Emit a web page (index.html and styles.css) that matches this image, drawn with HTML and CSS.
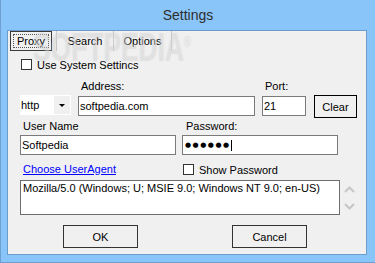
FILE: index.html
```html
<!DOCTYPE html>
<html lang="en">
<head>
  <meta charset="UTF-8">
  <meta name="viewport" content="width=device-width, initial-scale=1.0">
  <title>Settings</title>
  <link rel="stylesheet" href="styles.css">
</head>
<body>
  <div class="window">
    <div class="titlebar">Settings</div>
    <div class="client">
      <div class="tabs">
        <div class="tab active"><span class="focus">Proxy</span></div>
        <div class="tab plain">Search</div>
        <div class="tab plain last">Options</div>
      </div>

      <div class="panel">
        <div class="check-row">
          <span class="checkbox"></span>Use System Settincs
        </div>

        <div class="addr-grid">
          <span class="field-label col2">Address:</span>
          <span class="field-label col3">Port:</span>
          <div class="combo">
            <span class="combo-text">http</span>
            <span class="combo-btn"><span class="arrow"></span></span>
          </div>
          <div class="input shifted">softpedia.com</div>
          <div class="input shifted port">21</div>
          <div class="btn btn-clear">Clear</div>
        </div>

        <div class="user-grid">
          <span class="field-label">User Name</span>
          <span class="field-label pass-label">Password:</span>
          <div class="input">Softpedia</div>
          <div class="input password"><span class="dots">●●●●●●</span><span class="caret"></span></div>
        </div>

        <div class="option-row">
          <a class="link" href="#">Choose UserAgent</a>
          <div class="check-row show-pass">
            <span class="checkbox"></span>Show Password
          </div>
        </div>

        <div class="agent-row">
          <div class="agent-box">Mozilla/5.0 (Windows; U; MSIE 9.0; Windows NT 9.0; en-US)</div>
          <svg class="scroll" width="11" height="35" viewBox="0 0 11 35">
            <polyline points="1,12 5.5,7.5 10,12" fill="none" stroke="#c6c6c6" stroke-width="2"/>
            <polyline points="1,24 5.5,28.5 10,24" fill="none" stroke="#c6c6c6" stroke-width="2"/>
          </svg>
        </div>

        <div class="button-row">
          <div class="btn btn-ok">OK</div>
          <div class="btn btn-cancel">Cancel</div>
        </div>
      </div>
    </div>
    <div class="watermark">SOFTPEDIA<sup>®</sup></div>
  </div>
</body>
</html>
```

FILE: styles.css
```css
* {
  box-sizing: border-box;
}

body {
  margin: 0;
  font-family: "Liberation Sans", Arial, sans-serif;
  font-size: 11px;
  color: #000;
}

.window {
  position: relative;
  width: 375px;
  height: 263px;
  background-color: #8ac5fa;
  border-left: 1px solid #6d9fd1;
  border-bottom: 1px solid #6d9fd1;
  overflow: hidden;
}

.titlebar {
  height: 30px;
  line-height: 30px;
  text-align: center;
  font-size: 14px;
  color: #2d2d2d;
}

.client {
  margin-left: 6px;
  width: 360px;
  height: 225px;
  border: 1px solid #6b9cce;
  background-color: #f0f0f0;
  overflow: hidden;
}

/* onglets */
.tabs {
  display: flex;
  height: 20px;
}

.tab {
  height: 20px;
  display: flex;
  align-items: center;
  justify-content: center;
}

.tab.active {
  width: 42px;
  margin-left: 2px;
  margin-right: 4px;
  border: 1px solid #3a3a3a;
  padding: 2px;
}

.tab.active .focus {
  width: 100%;
  height: 100%;
  border: 1px dotted #555;
  display: flex;
  align-items: center;
  justify-content: center;
}

.tab.plain {
  width: 57px;
  border-left: 1px solid #c8c8c8;
}

.tab.plain.last {
  width: 59px;
  border-right: 1px solid #c8c8c8;
}

.panel {
  padding: 7px 0 0 12px;
}

.check-row {
  display: flex;
  align-items: center;
  height: 13px;
}

.checkbox {
  width: 11px;
  height: 11px;
  margin-left: 1px;
  margin-right: 5px;
  border: 1px solid #333;
  background-color: #fff;
}

.field-label {
  line-height: 13px;
  padding-left: 3px;
}

.addr-grid {
  display: grid;
  grid-template-columns: 51px 177px 45px 43px;
  grid-template-rows: 13px 23px;
  column-gap: 7px;
  row-gap: 2px;
  margin-top: 9px;
}

.addr-grid > span {
  grid-row: 1;
}

.addr-grid > div {
  grid-row: 2;
}

.col2 {
  grid-column: 2;
}

.col3 {
  grid-column: 3;
}

.combo {
  height: 20px;
  background-color: #fff;
  display: flex;
}

.combo-text {
  flex: 1;
  padding-left: 1px;
  line-height: 20px;
}

.combo-btn {
  width: 16px;
  margin: 1px;
  background-color: #f0f0f0;
  display: flex;
  align-items: center;
  justify-content: center;
}

.arrow {
  width: 0;
  height: 0;
  border-left: 3px solid transparent;
  border-right: 3px solid transparent;
  border-top: 3px solid #000;
}

.input {
  height: 20px;
  border: 1px solid #7a7a7a;
  background-color: #fff;
  padding-left: 1px;
  line-height: 18px;
}

.input.shifted {
  margin-top: 1px;
}

.input.port {
  width: 44px;
}

.btn {
  height: 23px;
  border: 1px solid #333;
  background-color: #f0f0f0;
  display: flex;
  align-items: center;
  justify-content: center;
}

.btn-clear {
  border-color: #000;
}

.user-grid {
  display: grid;
  grid-template-columns: 156px 156px;
  grid-template-rows: 13px 20px;
  column-gap: 6px;
  row-gap: 2px;
  margin-top: 2px;
}

.pass-label {
  padding-left: 4px;
}

.password {
  display: flex;
  align-items: center;
  padding-left: 2px;
}

.dots {
  font-family: "DejaVu Sans", sans-serif;
  font-size: 7px;
  letter-spacing: 1.5px;
}

.caret {
  width: 1px;
  height: 11px;
  background-color: #000;
}

.option-row {
  display: grid;
  grid-template-columns: 156px 156px;
  column-gap: 6px;
  margin-top: 8px;
  height: 13px;
}

.link {
  line-height: 13px;
  padding-left: 3px;
  color: #0000ff;
}

.agent-row {
  display: flex;
  margin-top: 4px;
}

.agent-box {
  width: 320px;
  height: 35px;
  border: 1px solid #6e6e6e;
  background-color: #fff;
  padding: 1px 2px;
  line-height: 13px;
}

.scroll {
  margin-left: 4px;
}

.button-row {
  display: flex;
  margin-top: 10px;
}

.btn-ok {
  width: 75px;
  margin-left: 43px;
}

.btn-cancel {
  width: 75px;
  margin-left: 94px;
}

/* filigrane */
.watermark {
  position: absolute;
  left: 32px;
  top: 27px;
  font-size: 40px;
  line-height: 30px;
  font-weight: bold;
  color: rgba(255, 255, 255, 0.35);
  text-shadow: 0 0 1px rgba(120, 120, 120, 0.25);
  transform: scaleX(0.66);
  transform-origin: left top;
  pointer-events: none;
}

.watermark sup {
  font-size: 14px;
}
```
